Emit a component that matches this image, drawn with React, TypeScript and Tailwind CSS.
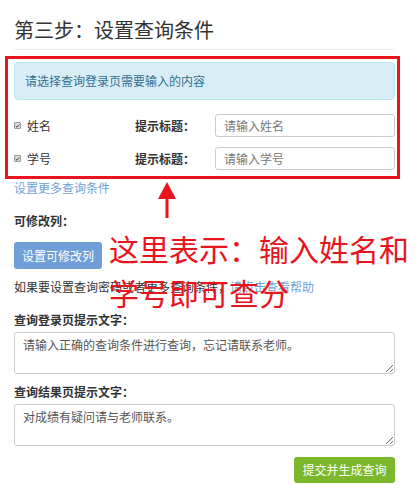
import React from 'react';

function Check() {
  return (
    <span className="flex h-[7px] w-[7px] items-center justify-center rounded-[1px] border border-[#9a9a9a] bg-[#dcdcdc]">
      <svg viewBox="0 0 8 8" className="h-[6px] w-[6px]">
        <path d="M1.2 4.2 L3.2 6 L6.8 1.6" fill="none" stroke="#333" strokeWidth="1.4" />
      </svg>
    </span>
  );
}

function FieldRow({ label, placeholder, first }: { label: string; placeholder: string; first?: boolean }) {
  return (
    <div className={`flex h-[23px] items-center ${first ? 'mt-[14px]' : 'mt-[10px]'}`}>
      <div className="w-[13px]">
        <Check />
      </div>
      <div className="w-[108px] text-[12px] text-[#333]">{label}</div>
      <div className="w-[80px] text-[12px] font-bold text-[#333]">提示标题：</div>
      <div className="flex h-[23px] flex-1 items-center rounded-[3px] border border-[#cccccc] px-[8px] text-[12px] text-[#777]">
        {placeholder}
      </div>
    </div>
  );
}

export default function App() {
  return (
    <div className="relative min-h-[502px] w-[418px] bg-white pl-[14px] pr-[23px] pt-[16px] font-['Noto_Sans_CJK_SC',sans-serif] text-[#333]">
      <h1 className="text-[20px] leading-[28px] font-normal text-[#333]">第三步：设置查询条件</h1>
      <div className="mt-[5px] border-t border-[#eeeeee]" />

      {/* red highlight box */}
      <div className="ml-[-9px] mr-[-5px] mt-[6px] border-[3px] border-[#e8141e] pb-[6px] pl-[6px] pr-[2px] pt-[3px]">
        <div className="flex h-[38px] items-center rounded-[4px] border border-[#bce8f1] bg-[#d9edf7] px-[10px] text-[12px] text-[#31708f]">
          请选择查询登录页需要输入的内容
        </div>
        <FieldRow label="姓名" placeholder="请输入姓名" first />
        <FieldRow label="学号" placeholder="请输入学号" />
      </div>

      <div className="text-[12px] leading-[18px] text-[#6fa1d6]">设置更多查询条件</div>

      <div className="mt-[15px] text-[12px] font-bold leading-[18px]">可修改列：</div>
      <button className="mt-[12px] flex h-[27px] w-[88px] items-center justify-center rounded-[3px] bg-[#6f9fd6] text-[12px] text-white">
        设置可修改列
      </button>
      <div className="mt-[9px] text-[12px] leading-[18px] text-[#333]">
        如果要设置查询密码或者更多查询条件，<span className="text-[#6fa1d6]">请点击查看帮助</span>
      </div>

      <div className="mt-[15px] text-[12px] font-bold leading-[18px]">查询登录页提示文字：</div>
      <textarea
        readOnly
        defaultValue="请输入正确的查询条件进行查询，忘记请联系老师。"
        className="mt-[3px] block h-[42px] w-full rounded-[3px] border border-[#cccccc] px-[8px] py-[3px] text-[12px] leading-[18px] text-[#555] outline-none"
      />

      <div className="mt-[9px] text-[12px] font-bold leading-[18px]">查询结果页提示文字：</div>
      <textarea
        readOnly
        defaultValue="对成绩有疑问请与老师联系。"
        className="mt-[3px] block h-[42px] w-full rounded-[3px] border border-[#cccccc] px-[8px] py-[3px] text-[12px] leading-[18px] text-[#555] outline-none"
      />

      <div className="mt-[11px] flex justify-end">
        <button className="flex h-[26px] w-[101px] items-center justify-center rounded-[3px] bg-[#7bb82c] text-[12px] text-white">
          提交并生成查询
        </button>
      </div>

      {/* annotation overlay */}
      <svg className="absolute left-[158px] top-[182px]" width="18" height="36" viewBox="0 0 18 36">
        <polygon points="9,0 0,17 18,17" fill="#e8141e" />
        <rect x="7.5" y="16" width="3" height="20" fill="#e8141e" />
      </svg>
      <div className="absolute left-[109px] top-[226px] whitespace-nowrap text-[30px] leading-[44px] text-[#e8141e]">
        这里表示：输入姓名和
        <br />
        学号即可查分
      </div>
    </div>
  );
}
